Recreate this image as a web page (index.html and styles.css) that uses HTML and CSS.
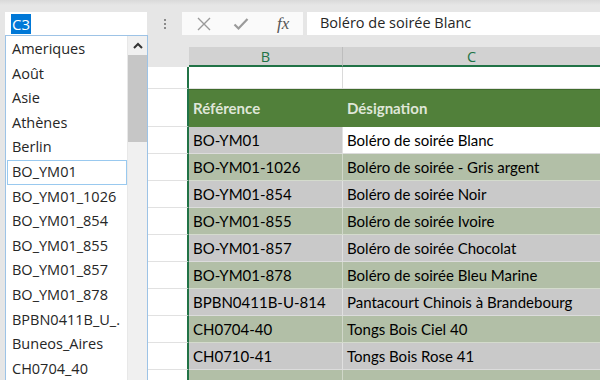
FILE: index.html
```html
<!DOCTYPE html>
<html lang="fr">
<head>
    <meta charset="UTF-8">
    <title>Zone Nom</title>
    <link rel="stylesheet" href="styles.css">
</head>
<body>
    <div class="app">
        <div class="topbar">
            <div class="namebox"><span class="sel">C3</span></div>
            <div class="dots"><i></i><i></i><i></i></div>
            <div class="fbtns">
                <svg class="ico" width="14" height="14" viewBox="0 0 14 14"><path d="M1 1L13 13M13 1L1 13" stroke="#9a9a9a" stroke-width="1.4" fill="none"/></svg>
                <svg class="ico" width="16" height="14" viewBox="0 0 16 14"><path d="M1.5 7.5L5.5 11.5L14.5 2" stroke="#9a9a9a" stroke-width="2.2" fill="none"/></svg>
                <span class="fx">fx</span>
            </div>
            <div class="finput">Boléro de soirée Blanc</div>
        </div>

        <div class="sheet">
            <div class="row colheads">
                <div class="rh"></div>
                <div class="ca"></div>
                <div class="cb">B</div>
                <div class="cc">C</div>
            </div>
            <div class="row r1">
                <div class="rh"></div>
                <div class="ca"></div>
                <div class="cb"></div>
                <div class="cc"></div>
            </div>
            <div class="row thead">
                <div class="rh"></div>
                <div class="ca"></div>
                <div class="cb">Référence</div>
                <div class="cc">Désignation</div>
            </div>
            <div class="row gray">
                <div class="rh"></div>
                <div class="ca"></div>
                <div class="cb">BO-YM01</div>
                <div class="cc active">Boléro de soirée Blanc</div>
            </div>
            <div class="row green">
                <div class="rh"></div>
                <div class="ca"></div>
                <div class="cb">BO-YM01-1026</div>
                <div class="cc">Boléro de soirée - Gris argent</div>
            </div>
            <div class="row gray">
                <div class="rh"></div>
                <div class="ca"></div>
                <div class="cb">BO-YM01-854</div>
                <div class="cc">Boléro de soirée Noir</div>
            </div>
            <div class="row green">
                <div class="rh"></div>
                <div class="ca"></div>
                <div class="cb">BO-YM01-855</div>
                <div class="cc">Boléro de soirée Ivoire</div>
            </div>
            <div class="row gray">
                <div class="rh"></div>
                <div class="ca"></div>
                <div class="cb">BO-YM01-857</div>
                <div class="cc">Boléro de soirée Chocolat</div>
            </div>
            <div class="row green">
                <div class="rh"></div>
                <div class="ca"></div>
                <div class="cb">BO-YM01-878</div>
                <div class="cc">Boléro de soirée Bleu Marine</div>
            </div>
            <div class="row gray">
                <div class="rh"></div>
                <div class="ca"></div>
                <div class="cb">BPBN0411B-U-814</div>
                <div class="cc">Pantacourt Chinois à Brandebourg</div>
            </div>
            <div class="row green">
                <div class="rh"></div>
                <div class="ca"></div>
                <div class="cb">CH0704-40</div>
                <div class="cc">Tongs Bois Ciel 40</div>
            </div>
            <div class="row gray">
                <div class="rh"></div>
                <div class="ca"></div>
                <div class="cb">CH0710-41</div>
                <div class="cc">Tongs Bois Rose 41</div>
            </div>
            <div class="row green">
                <div class="rh"></div>
                <div class="ca"></div>
                <div class="cb"></div>
                <div class="cc"></div>
            </div>
        </div>

        <!-- liste des noms ouverte sous la zone Nom -->
        <div class="dropdown">
            <ul class="names">
                <li>Ameriques</li>
                <li>Août</li>
                <li>Asie</li>
                <li>Athènes</li>
                <li>Berlin</li>
                <li class="hover">BO_YM01</li>
                <li>BO_YM01_1026</li>
                <li>BO_YM01_854</li>
                <li>BO_YM01_855</li>
                <li>BO_YM01_857</li>
                <li>BO_YM01_878</li>
                <li>BPBN0411B_U_.</li>
                <li>Buneos_Aires</li>
                <li>CH0704_40</li>
            </ul>
            <div class="scroll">
                <div class="up">
                    <svg width="10" height="7" viewBox="0 0 10 7"><path d="M1 6L5 2L9 6" stroke="#333" stroke-width="2" fill="none"/></svg>
                </div>
                <div class="thumb"></div>
            </div>
        </div>
    </div>
</body>
</html>
```

FILE: styles.css
```css
body {
    margin: 0;
    padding: 0;
    background-color: #ffffff;
    font-family: "Open Sans", sans-serif;
}

.app {
    position: relative;
    width: 600px;
    height: 380px;
    overflow: hidden;
    background-color: #ffffff;
}

/* barre de formule */
.topbar {
    height: 47px;
    box-sizing: border-box;
    padding: 12px 0 0 5px;
    display: flex;
    align-items: flex-start;
    background: linear-gradient(#d9d9d9, #e6e6e6 5px, #e6e6e6);
}

.namebox {
    width: 142px;
    height: 23px;
    box-sizing: border-box;
    background-color: #ffffff;
    padding: 1px 0 0 6px;
}

.sel {
    display: inline-block;
    height: 20px;
    line-height: 20px;
    padding: 0 1px;
    background-color: #0078d7;
    color: #ffffff;
    font-size: 15px;
}

.dots {
    width: 35px;
    height: 23px;
    display: flex;
    flex-direction: column;
    align-items: center;
    justify-content: center;
    gap: 2px;
}

.dots i {
    width: 2px;
    height: 2px;
    background-color: #8a8a8a;
}

.fbtns {
    width: 121px;
    height: 23px;
    background-color: #fafafa;
    display: flex;
    align-items: center;
    padding-left: 15px;
    box-sizing: border-box;
}

.fbtns .ico {
    margin-right: 22px;
}

.fbtns .fx {
    font-family: "Liberation Serif", serif;
    font-style: italic;
    font-size: 17px;
    color: #555555;
    margin-left: 6px;
}

.finput {
    flex: 1;
    height: 23px;
    margin-left: 4px;
    background-color: #ffffff;
    padding-left: 13px;
    font-size: 14.5px;
    line-height: 22px;
    color: #262626;
}

/* feuille */
.sheet {
    font-family: "Lato", sans-serif;
    font-size: 15px;
    color: #000000;
}

.row {
    display: grid;
    grid-template-columns: 148px 41px 154px 1fr;
    height: 27px;
}

.row > div {
    box-sizing: border-box;
    line-height: 26px;
    white-space: nowrap;
    overflow: hidden;
}

.rh {
    background-color: #e6e6e6;
}

.ca {
    background-color: #ffffff;
    border-bottom: 1px solid #e1e1e1;
    border-right: 2px solid #217346;
}

.cb {
    padding-left: 4px;
    border-right: 1px solid #dadada;
}

.cc {
    padding-left: 4px;
}

.colheads {
    height: 20px;
}

.colheads .ca {
    background-color: #e6e6e6;
    border: none;
}

.colheads .cb,
.colheads .cc {
    background-color: #d2d2d2;
    border-bottom: 2px solid #217346;
    color: #217346;
    text-align: center;
    font-family: "Open Sans", sans-serif;
    font-size: 14.5px;
    line-height: 19px;
    padding: 0;
}

.colheads .cb {
    border-right: 1px solid #bdbdbd;
}

.r1 {
    height: 22px;
}

.r1 .cb,
.r1 .cc {
    border-bottom: 1px solid #e1e1e1;
}

.thead {
    height: 38px;
}

.thead .cb,
.thead .cc {
    background-color: #51803a;
    border-top: 1px solid #3f6b2b;
    border-right: none;
    color: #dfe6d8;
    font-weight: bold;
    line-height: 36px;
}

.gray .cb,
.gray .cc {
    background-color: #c9c9c9;
    border-bottom: 1px solid #dcdcdc;
}

.gray .cb {
    border-right: 1px solid #e0e0e0;
}

.green .cb,
.green .cc {
    background-color: #b2bfa7;
    border-bottom: 1px solid #d4dbcd;
}

.green .cb {
    border-right: 1px solid #d0d7c9;
}

.gray .cc.active {
    background-color: #ffffff;
}

/* liste déroulante */
.dropdown {
    position: absolute;
    left: 5px;
    top: 35px;
    width: 143px;
    height: 350px;
    box-sizing: border-box;
    background-color: #ffffff;
    border: 1px solid #9dc3e6;
    display: flex;
}

.names {
    list-style: none;
    margin: 0;
    padding: 1px 0 0 1px;
    flex: 1;
}

.names li {
    height: 24.6px;
    line-height: 23px;
    padding-left: 5px;
    font-size: 14.5px;
    color: #262626;
    box-sizing: border-box;
    white-space: nowrap;
}

.names li.hover {
    border: 1px solid #99c9ef;
    padding-left: 4px;
    line-height: 21px;
}

.scroll {
    width: 19px;
    background-color: #f0f0f0;
    border-left: 1px solid #e8e8e8;
}

.up {
    height: 19px;
    display: flex;
    align-items: center;
    justify-content: center;
    background-color: #f0f0f0;
}

.thumb {
    height: 87px;
    background-color: #c6c6c6;
}
```
